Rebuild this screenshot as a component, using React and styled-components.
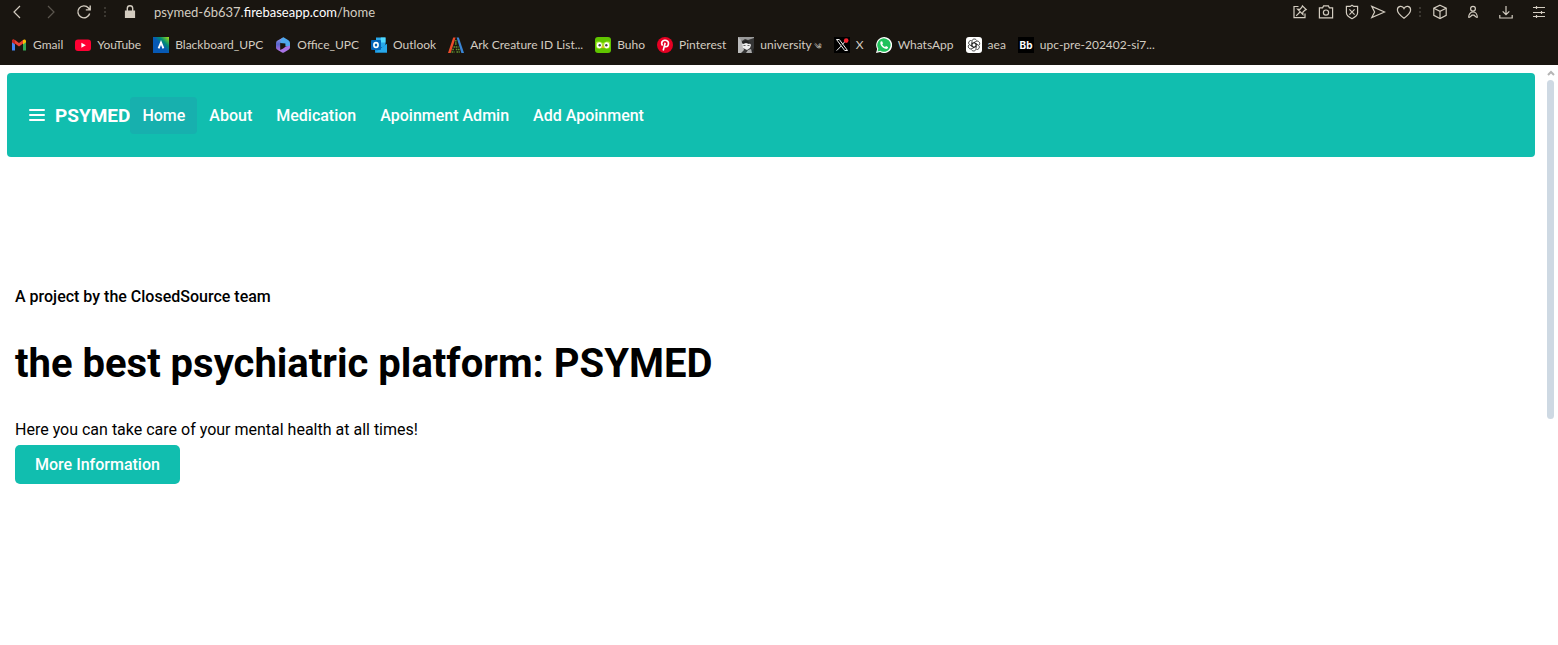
import React from "react";
import styled, { createGlobalStyle } from "styled-components";

const GlobalStyle = createGlobalStyle`
  *, *::before, *::after { box-sizing: border-box; }
  body { margin: 0; background: #fff; color: #000; font-family: Roboto, "Liberation Sans", sans-serif; font-size: 16px; }
  a { color: inherit; text-decoration: none; }
  button { font: inherit; border: 0; padding: 0; background: none; color: inherit; cursor: pointer; }
  svg { display: block; flex: none; }
`;

const Screen = styled.div`
  display: flex;
  flex-direction: column;
  min-height: 100vh;
`;

const BrowserChrome = styled.header`
  height: 65px;
  background: #191510;
  color: #d3ccc0;
  font-family: Lato, "Open Sans", sans-serif;
  overflow: hidden;
`;

const AddressRow = styled.div`
  display: flex;
  align-items: center;
  justify-content: space-between;
  height: 24px;
  padding: 0 3px 0 5px;
`;

const ToolGroup = styled.div`
  display: flex;
  align-items: center;
`;

const ToolButton = styled.button`
  display: flex;
  align-items: center;
  justify-content: center;
  width: ${(p) => (p.$wide ? 33 : 26)}px;
  height: 20px;
  color: ${(p) => (p.$dim ? "#5b564e" : "#d3ccc0")};
`;

const Dots = styled.span`
  height: 10px;
  width: 2px;
  margin: 0 2px;
  background: repeating-linear-gradient(#3b3731 0 2px, transparent 2px 4px);
`;

const Address = styled.span`
  margin-left: 4px;
  font-size: 13px;
  line-height: 20px;
  white-space: nowrap;
  strong { font-weight: 400; color: #fff; }
`;

const NavButtons = styled(ToolGroup)`
  gap: 7px;
  ${Dots} { margin: 0 4px 0 0; }
`;

const Bookmarks = styled.nav`
  display: flex;
  align-items: center;
  gap: 12px;
  height: 41px;
  padding: 0 11px;
`;

const Bookmark = styled.a`
  display: flex;
  align-items: center;
  gap: 6px;
  font-size: 12px;
  line-height: 16px;
  white-space: nowrap;
`;

const Ornament = styled.span`
  font-size: 8px;
  line-height: 0;
`;

const Viewport = styled.div`
  flex: 1;
  display: flex;
`;

const Page = styled.div`
  flex: 1;
  min-width: 0;
  padding: 8px 8px 0 7px;
`;

const ScrollRail = styled.div`
  width: 15px;
  display: flex;
  flex-direction: column;
  align-items: center;
  gap: 4px;
  padding-top: 5px;
`;

const ScrollThumb = styled.div`
  width: 7px;
  height: 59%;
  border-radius: 4px;
  background: #ced9e3;
`;

const Toolbar = styled.nav`
  display: flex;
  align-items: center;
  padding: 24px 20px 23px;
  border-radius: 4px;
  background: #11beaf;
  color: #fff;
`;

const MenuButton = styled.button`
  display: flex;
  align-items: center;
  justify-content: center;
  width: 20px;
  height: 20px;
  margin-right: 8px;
`;

const Brand = styled.span`
  font-size: 19px;
  font-weight: 700;
  line-height: 24px;
`;

const NavLink = styled.a`
  padding: 8px 12px;
  border-radius: 4px;
  font-weight: 500;
  line-height: 21px;
  background: ${(p) => (p.$active ? "#17b0ae" : "transparent")};
`;

const Hero = styled.main`
  padding: 128px 8px 0;
`;

const Eyebrow = styled.p`
  margin: 0;
  font-weight: 500;
  line-height: 24px;
`;

const Title = styled.h1`
  margin: 31px 0 30px;
  font-size: 40px;
  font-weight: 700;
  line-height: 48px;
`;

const Lead = styled.p`
  margin: 0;
  line-height: 24px;
`;

const PrimaryButton = styled.button`
  margin-top: 3px;
  padding: 8px 20px;
  border-radius: 5px;
  background: #11beaf;
  color: #fff;
  font-weight: 500;
  line-height: 23px;
`;

const Line = ({ size = 16, sw = 1.2, children }) => (
  <svg width={size} height={size} viewBox="0 0 16 16" fill="none" stroke="currentColor" strokeWidth={sw} aria-hidden="true">
    {children}
  </svg>
);

const Fav = ({ children }) => (
  <svg width="16" height="16" viewBox="0 0 16 16" aria-hidden="true">{children}</svg>
);

const tools = [
  ["Edit pin", <><path d="M6.5 2.5H2v11.2h11V9.5" /><path d="M10.4 1.8l3.8 3.8-1.2.5-2.2 2.2.1 2.2-5.3-5.3 2.3.1 2-2.2zM8 8l-3.8 3.8" /></>],
  ["Snapshot", <><path d="M1.4 3.8h3.2l1-1.9h4.8l1 1.9h3.2v10H1.4z" /><circle cx="8" cy="8.6" r="2.6" /></>],
  ["Shield", <><path d="M8 1.2l1.8 1.2h3.8v6.4c0 3.3-3.2 4.8-5.6 5.9-2.4-1.1-5.6-2.6-5.6-5.9V2.4h3.8z" /><path d="M5.4 5.4l5.2 5.2m0-5.2l-5.2 5.2" /></>],
  ["Send", <path d="M1.8 2.4L14.6 8 1.8 13.6 4.6 8z" />],
  ["Favourites", <path d="M8 14.2C4.3 11.4 1.4 9.1 1.4 5.9c0-4 5-4.9 6.6-1.4 1.6-3.5 6.6-2.6 6.6 1.4 0 3.2-2.9 5.5-6.6 8.3z" />],
];

const wideTools = [
  ["Extensions", <><path d="M8 1.2l6.2 3v7.2L8 14.6l-6.2-3.2V4.2z" /><path d="M1.8 4.2L8 7.4l6.2-3.2M8 7.4v7.2" /></>],
  ["Profile", <><circle cx="8" cy="4.8" r="2.4" /><path d="M3.6 13.8c0-8 8.8-8 8.8 0M4.2 13.6L7 11.2h2l2.8 2.4" /></>],
  ["Downloads", <><path d="M8 2v8.4M4.7 7.3L8 10.6l3.3-3.3M1.8 11v3h12.4v-3" /></>],
  ["Setup", <><path d="M2 3.5h12M2 8.5h12M2 12.5h12M5.5 2v3M10.5 7v3M5.5 11v3" /></>],
];

const bookmarks = [
  ["Gmail", <><path d="M1 13.5V4.2l3 2.2v7.1z" fill="#4285f4" /><path d="M12 13.5V6.4l3-2.2v9.3z" fill="#34a853" /><path d="M1 5.2V4c0-1.6 1.8-2.1 3-1.1l4 3 4-3v3.6l-4 3-4-3z" fill="#ea4335" /><path d="M12 2.9c1.2-1 3-.5 3 1.1v1.2l-3 2.2z" fill="#fbbc04" /><path d="M1 4c0-1 .6-1.5 1.4-1.5L4 3.6v3.8L1 5.2z" fill="#c5221f" /></>],
  ["YouTube", <><rect y="2.5" width="16" height="11.5" rx="3" fill="#ff0033" /><path d="M6.4 5.8v5L10.8 8.3z" fill="#fff" /></>],
  ["Blackboard_UPC", <><defs><linearGradient id="bb" x1="0" y1="1" x2="1" y2="0"><stop offset=".5" stopColor="#0759b5" /><stop offset=".7" stopColor="#008d72" /><stop offset="1" stopColor="#a5e010" /></linearGradient></defs><path d="M0 0h16v16H0z" fill="url(#bb)" /><path d="M5.6 11.3L8 5.4l2.4 5.9" stroke="#fff" strokeWidth="1.9" fill="none" /></>],
  ["Office_UPC", <><defs><linearGradient id="of" x1="0" y1="0" x2="0" y2="1"><stop offset="0" stopColor="#a6a2f0" /><stop offset=".5" stopColor="#5566cc" /><stop offset="1" stopColor="#b06be0" /></linearGradient></defs><path d="M8.5.3L2.6 3.6Q1 4.5 1 6.2v4.2q0 1.6 1.5 2.4l2.7 1V6.3z" fill="url(#of)" /><path d="M8.5.3l4.9 3Q15 4.3 15 6v4.2l-4.6-1V6.4L5.2 6C5.3 3 6 1.5 8.5.3z" fill="#4fa8ee" /><path d="M15 8.5v2q0 1.5-1.5 2.3L9 15.5q-1 .5-2 0L2.5 12.8c3 .8 5.5-1 7.9-3z" fill="#a873e6" /></>],
  ["Outlook", <><path d="M5 .5h9.5v10H5z" fill="#28a8ea" /><path d="M9.8.5h4.7v5H9.8z" fill="#50d9ff" /><path d="M4 7l6 4 6-4v8.5H4z" fill="#1490df" /><path d="M4 15.5L16 7v8.5z" fill="#28a8ea" /><rect y="3" width="10" height="10" rx="1" fill="#0364b8" /><ellipse cx="5" cy="8" rx="2.1" ry="2.4" fill="none" stroke="#fff" strokeWidth="1.6" /></>],
  ["Ark Creature ID List...", <><path d="M0 16L5.2.5h2.4L2.7 16z" fill="#ec4c2b" /><path d="M8.6.5h2.2L16 16h-2.6z" fill="#3985d5" /><path d="M7.8 3v3M7 7h2M5.5 10h5M4.3 12.5h2m1.5 0h4M3.5 15h3m2 0h3.3" stroke="#62932e" strokeWidth="1.5" strokeDasharray="1.6 .6" /></>],
  ["Buho", <><rect width="16" height="16" rx="3" fill="#60c500" /><path d="M1 5c3-1 5 0 7 1 2-1 4-2 7-1v5c-2 3-5 2-7 0-2 2-5 3-7 0z" fill="#a6e729" /><rect x="1.8" y="5.3" width="5" height="6" rx="2.4" fill="#fff" /><rect x="9.2" y="5.3" width="5" height="6" rx="2.4" fill="#fff" /><circle cx="4.7" cy="8.3" r="1.2" fill="#43464b" /><circle cx="11.3" cy="8.3" r="1.2" fill="#43464b" /><path d="M6.5 9.5h3L8 11.5z" fill="#ffb020" /></>],
  ["Pinterest", <><circle cx="8" cy="8" r="8" fill="#e60023" /><path d="M5.5 8.7C3 4.5 7 2.6 9.4 3.5c3.5 1.3 2.1 6.4-.6 6.2-.8 0-1.2-.4-1.4-.8M8.2 5.7L6.2 13.5" stroke="#fff" strokeWidth="1.6" fill="none" /></>],
  ["university", <><path d="M0 0h16v16H0z" fill="#363636" /><path d="M0 0h3l1 6 2 7-3 3H0z" fill="#bbb" /><path d="M0 0h16v1L13 2l-3 1-3-1-3 2z" fill="#999" /><path d="M4 7l2-2 2 1 3-1 2 3-1 3-3 2-4-2z" fill="#eee" /><path d="M4 5l4-2 5 3-2 1-3-1-3 1zM12 16l4-5v5z" fill="#222" /><path d="M10 13l3-1 1 4H8z" fill="#aaa" /><path d="M5.5 8.5h2m2 0h2" stroke="#666" /></>, "༄"],
  ["X", <><path d="M0 0h16v16H0z" fill="#000" /><path d="M2.5 2.5h2.8l8.2 11h-2.8zM12.8 2.5l-4.5 5M7.2 9l-4.5 4.6" stroke="#eee" strokeWidth="1" fill="none" /><circle cx="12.2" cy="3.6" r="2.3" fill="#f4212e" /></>],
  ["WhatsApp", <><path d="M0 16l1.2-4A8 8 0 1 1 4.2 15z" fill="#fff" /><path d="M1.5 14.5l.8-2.8a6.7 6.7 0 1 1 2 2z" fill="#20c25b" /><path d="M5 4.2c-2 1.5.5 7.5 5.5 7.7 1.4-.2 1.8-1.2 1.4-1.9L10 9l-.9 1C7.6 9.5 6.5 8.2 6.3 7.3l.7-.9-.7-2z" fill="#fff" /></>],
  ["aea", <><rect width="16" height="16" rx="3" fill="#fff" /><g fill="none" stroke="#222" strokeWidth=".8">{[0, 60, 120, 180, 240, 300].map((a) => <path key={a} transform={`rotate(${a} 8 8)`} d="M6 6.8V4.2c0-2.5 3.7-3 4.6-.7M6 6.8l2-1.2 3.2 1.9" />)}</g></>],
  ["upc-pre-202402-si7...", <><path d="M0 0h16v16H0z" fill="#000" /><text x="8" y="12" textAnchor="middle" fill="#fff" fontFamily="Inter, sans-serif" fontWeight="700" fontSize="10">Bb</text></>],
];

const links = ["Home", "About", "Medication", "Apoinment Admin", "Add Apoinment"];

export default function App() {
  return (
    <Screen>
      <GlobalStyle />
      <BrowserChrome>
        <AddressRow>
          <NavButtons>
            <ToolButton aria-label="Back"><Line><path d="M10 2L4 8l6 6" /></Line></ToolButton>
            <ToolButton aria-label="Forward" $dim><Line><path d="M5 2l6 6-6 6" /></Line></ToolButton>
            <ToolButton aria-label="Reload"><Line sw={1.4}><path d="M13.7 9.5A6 6 0 1 1 12.5 4L14 5.8M14.2 1.5v4.4H9.8" /></Line></ToolButton>
            <Dots />
            <ToolButton aria-label="Site information"><Line><path d="M3.5 7h9v6.5h-9z" fill="currentColor" /><path d="M5.3 7V4.5a2.7 2.7 0 0 1 5.4 0V7" strokeWidth="1.4" /></Line></ToolButton>
            <Address>psymed-6b637.<strong>firebaseapp.com</strong>/home</Address>
          </NavButtons>
          <ToolGroup>
            {tools.map(([name, art]) => <ToolButton key={name} aria-label={name}><Line>{art}</Line></ToolButton>)}
            <Dots />
            {wideTools.map(([name, art]) => <ToolButton key={name} aria-label={name} $wide><Line>{art}</Line></ToolButton>)}
          </ToolGroup>
        </AddressRow>
        <Bookmarks aria-label="Bookmarks">
          {bookmarks.map(([name, art, ornament]) => (
            <Bookmark key={name} href="#">
              <Fav>{art}</Fav>
              <span>{name}{ornament && <Ornament> {ornament}</Ornament>}</span>
            </Bookmark>
          ))}
        </Bookmarks>
      </BrowserChrome>
      <Viewport>
        <Page>
          <Toolbar aria-label="Main">
            <MenuButton aria-label="Menu">
              <svg width="18" height="14" viewBox="0 0 18 14" stroke="#fff" strokeWidth="2" strokeLinecap="round"><path d="M2 1h14M2 6h14M2 11h14" /></svg>
            </MenuButton>
            <Brand>PSYMED</Brand>
            {links.map((l, i) => <NavLink key={l} href="#" $active={i === 0}>{l}</NavLink>)}
          </Toolbar>
          <Hero>
            <Eyebrow>A project by the ClosedSource team</Eyebrow>
            <Title>the best psychiatric platform: PSYMED</Title>
            <Lead>Here you can take care of your mental health at all times!</Lead>
            <PrimaryButton>More Information</PrimaryButton>
          </Hero>
        </Page>
        <ScrollRail aria-hidden="true">
          <svg width="8" height="6" viewBox="0 0 8 6" fill="none" stroke="#b5b5b5" strokeWidth="2"><path d="M1 5l3-3 3 3" /></svg>
          <ScrollThumb />
        </ScrollRail>
      </Viewport>
    </Screen>
  );
}
